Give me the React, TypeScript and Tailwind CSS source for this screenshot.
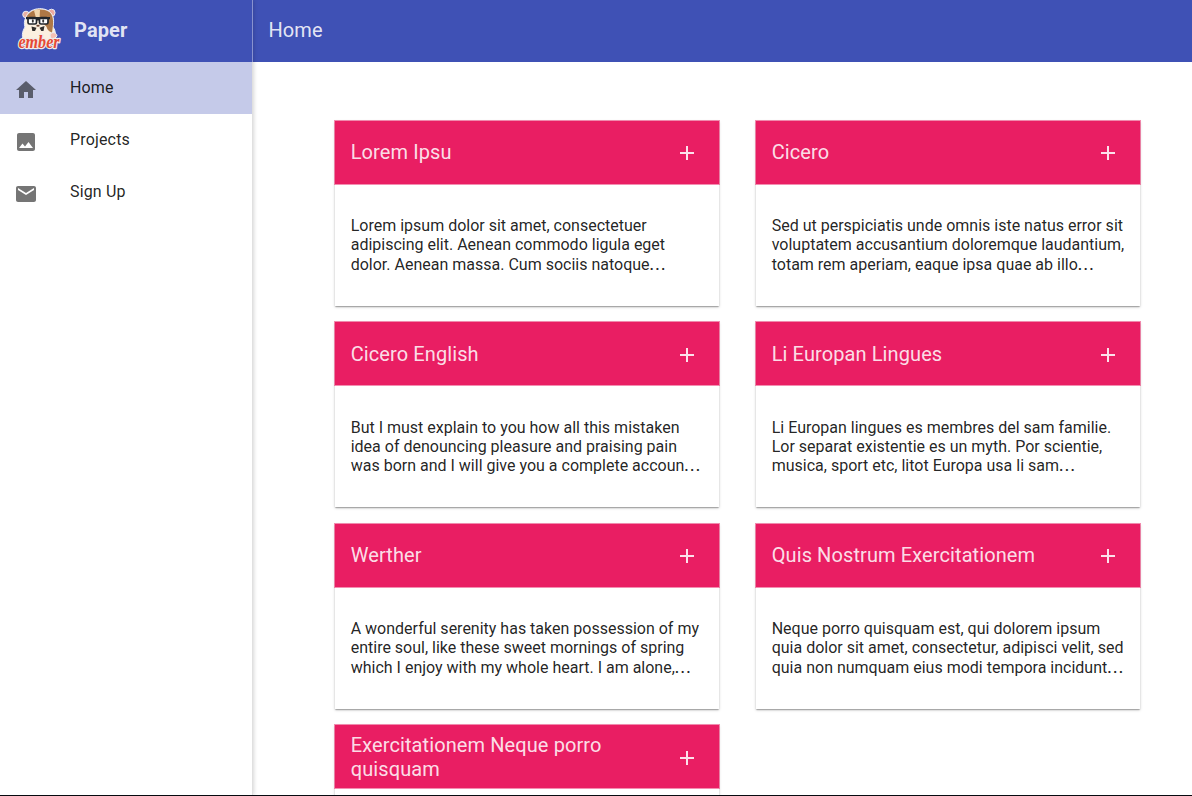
type CardData = { title: string; lines: string[] };

const cards: CardData[] = [
  { title: 'Lorem Ipsu', lines: ['Lorem ipsum dolor sit amet, consectetuer', 'adipiscing elit. Aenean commodo ligula eget', 'dolor. Aenean massa. Cum sociis natoque…'] },
  { title: 'Cicero', lines: ['Sed ut perspiciatis unde omnis iste natus error sit', 'voluptatem accusantium doloremque laudantium,', 'totam rem aperiam, eaque ipsa quae ab illo…'] },
  { title: 'Cicero English', lines: ['But I must explain to you how all this mistaken', 'idea of denouncing pleasure and praising pain', 'was born and I will give you a complete accoun…'] },
  { title: 'Li Europan Lingues', lines: ['Li Europan lingues es membres del sam familie.', 'Lor separat existentie es un myth. Por scientie,', 'musica, sport etc, litot Europa usa li sam…'] },
  { title: 'Werther', lines: ['A wonderful serenity has taken possession of my', 'entire soul, like these sweet mornings of spring', 'which I enjoy with my whole heart. I am alone,…'] },
  { title: 'Quis Nostrum Exercitationem', lines: ['Neque porro quisquam est, qui dolorem ipsum', 'quia dolor sit amet, consectetur, adipisci velit, sed', 'quia non numquam eius modi tempora incidunt…'] },
  { title: 'Exercitationem Neque porro quisquam', lines: [] },
];

const navItems = [
  { label: 'Home', active: true, path: 'M10 20v-6h4v6h5v-8h3L12 3 2 12h3v8z' },
  { label: 'Projects', active: false, path: 'M21 19V5c0-1.100-.900-2-2-2H5c-1.100 0-2 .900-2 2v14c0 1.100.900 2 2 2h14c1.100 0 2-.900 2-2zM8.500 13.500l2.500 3.010L14.500 12l4.500 6H5l3.500-4.500z' },
  { label: 'Sign Up', active: false, path: 'M20 4H4c-1.100 0-1.990.900-1.990 2L2 18c0 1.100.900 2 2 2h16c1.100 0 2-.900 2-2V6c0-1.100-.900-2-2-2zm0 4l-8 5-8-5V6l8 5 8-5v2z' },
];

function HamsterLogo() {
  return (
    <svg viewBox="0 0 50 50" className="h-[50px] w-[50px] shrink-0">
      <g stroke="#e9edf7" strokeWidth="1">
        <circle cx="12" cy="10.500" r="3.300" fill="#eab0a3" />
        <circle cx="37.500" cy="8.800" r="3.600" fill="#edaaa0" />
        <path d="M12 13C15 3.500 31 2 37 9c3 4 3 9 2 14 3 4 3 8 1 16H11c-4-6-3-11 0-16-1-3-1-6 1-10z" fill="#fcf0e0" />
        <path d="M36 32c0-5 7-4 7 0l-5 5z" fill="#f5bfb3" />
      </g>
      <path d="M12.500 13C16 4.500 30 3.500 36 8.500c4 4 3.500 12 2 20-3-1-6-4-7.500-8L24 14 12.500 15z" fill="#ae7846" />
      <path d="M20 6.500q3-1.500 6-.500l-.5 9-3 1z" fill="#f0d5ac" />
      <path d="M14 21q5-1 10-1t8 2q3 5 1 9-9 5-17 1-4-5-2-11z" fill="#fcf0e0" />
      <g fill="#fff" stroke="#20252b" strokeWidth="1.700">
        <rect x="14" y="13.500" width="8.500" height="6.500" rx="1.500" />
        <rect x="25.500" y="13.500" width="8.500" height="6.500" rx="1.500" />
        <path d="M12 14.200H36M22 15.500h4" fill="none" strokeWidth="2.200" />
      </g>
      <ellipse cx="18.800" cy="17" rx="1" ry="1.700" fill="#353536" />
      <ellipse cx="29.200" cy="17" rx="1" ry="1.700" fill="#353536" />
      <ellipse cx="24" cy="21.800" rx="1.700" ry="1" fill="#66402e" />
      <path d="M17.500 22.500l5 1.300-1.500 3.200H18.300zM30.500 22l-5 1.800 1.800 3.200h2.200z" fill="#302e2c" />
      <text x="4.500" y="43.500" textLength="41" lengthAdjust="spacingAndGlyphs" stroke="#f1ece9" strokeWidth="2.400" strokeLinejoin="round" paintOrder="stroke" fill="#e64a35" className="font-['Liberation_Serif',serif] text-[18px] font-bold italic">ember</text>
    </svg>
  );
}

function BodyLine({ text }: { text: string }) {
  if (!text.endsWith('…')) return <p>{text}</p>;
  return <p>{text.slice(0, -1)}<span className="font-medium tracking-[1.300px]">...</span></p>;
}

function Card({ card }: { card: CardData }) {
  return (
    <article className="h-[185px] w-[384px] bg-white shadow-[0_1px_3px_0_rgba(0,0,0,.2),0_1px_1px_0_rgba(0,0,0,.14),0_2px_1px_-1px_rgba(0,0,0,.12)]">
      <header className="flex h-[63px] items-center justify-between bg-[#e91e63] pr-5 pl-[15.700px] text-white/87 outline outline-[#e91e63]/50">
        <h2 className="w-[270px] text-[20px] leading-6 tracking-[.1px]">{card.title}</h2>
        <svg viewBox="0 0 24 24" className="relative top-[1px] h-6 w-6 fill-current">
          <path d="M19 13h-6v6h-2v-6H5v-2h6V5h2v6h6v2z" />
        </svg>
      </header>
      <div className="px-[15.700px] pt-[32.600px] text-[16px] leading-[19.200px] whitespace-nowrap text-black/87">
        {card.lines.map((line) => <BodyLine key={line} text={line} />)}
      </div>
    </article>
  );
}

export default function App() {
  return (
    <div className="flex h-[796px] w-[1192px] flex-col overflow-hidden bg-white font-[Roboto,sans-serif]">
      <div className="flex min-h-0 flex-1">
        <aside className="z-10 flex w-[253px] shrink-0 flex-col border-r border-[#e0e0e0] shadow-[1px_0_4px_rgba(0,0,0,.16)]">
          <div className="-mr-px flex h-[62px] shrink-0 items-start border-r border-[#8992cf] bg-[#3f51b5] pt-1 pl-[14px] text-white/87">
            <HamsterLogo />
            <h1 className="mt-[14px] ml-[10px] text-[20px] leading-6 font-bold tracking-[.1px]">Paper</h1>
          </div>
          <nav>
            {navItems.map((item) => (
              <a key={item.label} className={item.active ? 'flex h-[52px] items-center bg-[#c5cae9] px-[14px]' : 'flex h-[52px] items-center px-[14px]'}>
                <svg viewBox="0 0 24 24" className="mt-1 h-6 w-6 fill-black/54"><path d={item.path} /></svg>
                <span className="ml-8 text-[16px] leading-5 tracking-[.16px] text-black/87">{item.label}</span>
              </a>
            ))}
          </nav>
        </aside>
        <div className="flex min-w-0 flex-1 flex-col">
          <header className="flex h-[62px] shrink-0 items-center bg-[#3f51b5] pl-[15.500px] text-[20px] tracking-[.1px] text-white/87">
            <span className="-mt-[2px]">Home</span>
          </header>
          <main className="grid min-h-0 flex-1 grid-cols-[384px_384px] content-start gap-x-[37px] gap-y-[16.500px] overflow-hidden pt-[58.500px] pl-[82px]">
            {cards.map((card) => <Card key={card.title} card={card} />)}
          </main>
        </div>
      </div>
      <div className="h-px shrink-0 bg-[#080a10]" />
    </div>
  );
}
